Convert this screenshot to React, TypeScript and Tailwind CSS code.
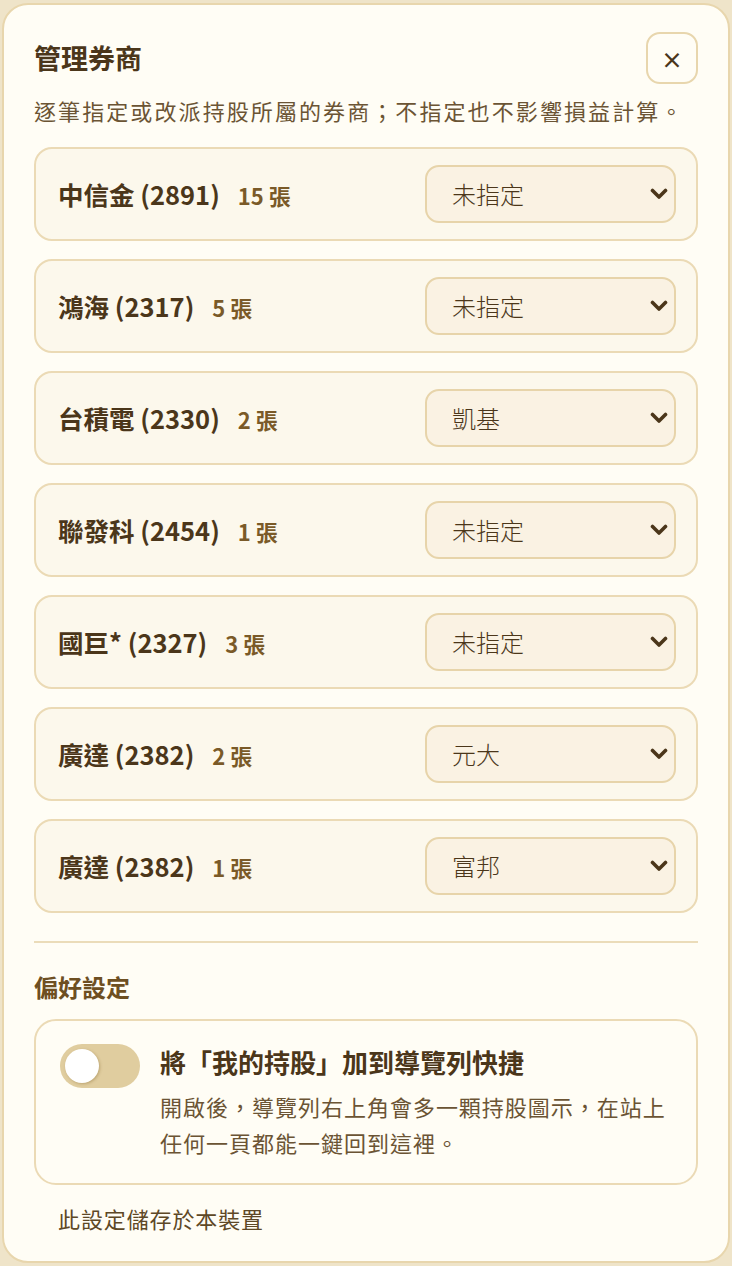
import { useState } from 'react';

type Holding = {
  id: number;
  name: string;
  code: string;
  lots: number;
  broker: string;
};

const BROKERS = ['未指定', '凱基', '元大', '富邦', '國泰', '永豐金'];

const HOLDINGS: Holding[] = [
  { id: 1, name: '中信金', code: '2891', lots: 15, broker: '未指定' },
  { id: 2, name: '鴻海', code: '2317', lots: 5, broker: '未指定' },
  { id: 3, name: '台積電', code: '2330', lots: 2, broker: '凱基' },
  { id: 4, name: '聯發科', code: '2454', lots: 1, broker: '未指定' },
  { id: 5, name: '國巨*', code: '2327', lots: 3, broker: '未指定' },
  { id: 6, name: '廣達', code: '2382', lots: 2, broker: '元大' },
  { id: 7, name: '廣達', code: '2382', lots: 1, broker: '富邦' },
];

function BrokerSelect({ value, onChange }: { value: string; onChange: (v: string) => void }) {
  return (
    <div className="relative w-[251px] shrink-0">
      <select
        value={value}
        onChange={(e) => onChange(e.target.value)}
        className="h-[58px] w-full appearance-none rounded-[14px] border-2 border-[#e7d4aa] bg-[#faf2e3] pl-[25px] pr-10 text-[24px] font-light text-[#4b361a] outline-none"
      >
        {BROKERS.map((b) => (
          <option key={b} value={b}>
            {b}
          </option>
        ))}
      </select>
      <svg
        className="pointer-events-none absolute right-[8px] top-1/2 h-[12px] w-[18px] -translate-y-1/2"
        viewBox="0 0 18 12"
        fill="none"
      >
        <path d="M2.5 2.5 9 9l6.5-6.5" stroke="#4b361a" strokeWidth="3.6" strokeLinecap="round" strokeLinejoin="round" />
      </svg>
    </div>
  );
}

export default function App() {
  const [rows, setRows] = useState(HOLDINGS);
  const [shortcut, setShortcut] = useState(false);

  const setBroker = (id: number, broker: string) =>
    setRows((prev) => prev.map((r) => (r.id === id ? { ...r, broker } : r)));

  return (
    <div
      className="min-h-screen bg-[#efe4c9] px-[2px] py-[3px]"
      style={{ fontFamily: '"Noto Sans CJK TC", "Noto Sans", sans-serif' }}
    >
      <div className="rounded-[26px] border-2 border-[#e8d6ad] bg-[#fffdf5] px-[30px] pb-[27px] pt-[27px]">
        <div className="flex h-[52px] items-center justify-between">
          <h2 className="text-[27px] font-bold text-[#4b361a]">管理券商</h2>
          <button className="flex h-[52px] w-[52px] items-center justify-center rounded-[14px] border-2 border-[#e8d6ad] bg-[#fffdf5] text-[22px] font-bold text-[#4b361a]">
            ×
          </button>
        </div>
        <p className="mt-[10px] text-[22px] leading-[32px] tracking-[0.095em] text-[#6b5434]">
          逐筆指定或改派持股所屬的券商；不指定也不影響損益計算。
        </p>

        <div className="mt-[21px] flex flex-col gap-[18px]">
          {rows.map((r) => (
            <div
              key={r.id}
              className="flex items-center justify-between rounded-[18px] border-2 border-[#ebdab5] bg-[#fcf8ec] py-[16px] pl-[22px] pr-[20px]"
            >
              <div className="flex items-baseline gap-[18px]">
                <span className="text-[25.5px] font-bold text-[#4b361a]">
                  {r.name} ({r.code})
                </span>
                <span className="text-[22px] font-bold text-[#7a5a28]">{r.lots} 張</span>
              </div>
              <BrokerSelect value={r.broker} onChange={(v) => setBroker(r.id, v)} />
            </div>
          ))}
        </div>

        <div className="mt-[28px] border-t-2 border-[#ebdcb9]" />

        <h3 className="mt-[28px] text-[24px] font-bold leading-[32px] text-[#6e4f22]">偏好設定</h3>

        <div className="mt-[16px] flex gap-[20px] rounded-[22px] border-2 border-[#ebdab5] bg-[#fffdf5] pb-[23px] pl-[24px] pr-[16px] pt-[23px]">
          <button
            onClick={() => setShortcut((s) => !s)}
            className={`relative h-[44px] w-[80px] shrink-0 rounded-full ${shortcut ? 'bg-[#b8893a]' : 'bg-[#e0cd9f]'}`}
          >
            <span
              className={`absolute top-[5px] h-[34px] w-[34px] rounded-full bg-white shadow-[1px_1px_3px_rgba(120,90,30,0.35)] ${shortcut ? 'left-[41px]' : 'left-[5px]'}`}
            />
          </button>
          <div className="min-w-0 flex-1">
            <div className="whitespace-nowrap text-[26px] font-bold leading-[36px] text-[#4b361a]">將「我的持股」加到導覽列快捷</div>
            <p className="mt-[8px] text-[22px] leading-[36px] tracking-[0.045em] text-[#6b5434]">
              <span className="block whitespace-nowrap">開啟後，導覽列右上角會多一顆持股圖示，在站上</span>
              <span className="block whitespace-nowrap">任何一頁都能一鍵回到這裡。</span>
            </p>
          </div>
        </div>

        <p className="mt-[17px] pl-[24px] text-[22px] leading-[32px] tracking-[0.04em] text-[#5e4826]">此設定儲存於本裝置</p>
      </div>
    </div>
  );
}
